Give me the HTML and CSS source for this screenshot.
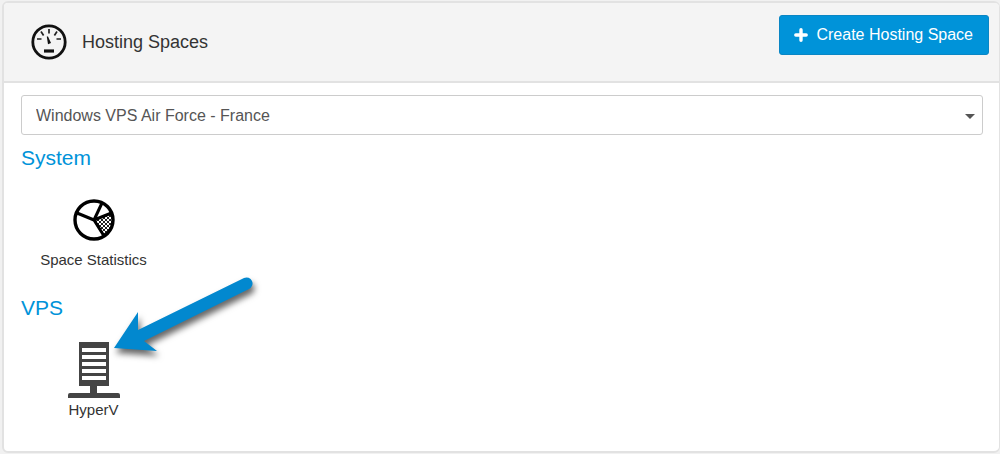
FILE: index.html
```html
<!DOCTYPE html>
<html lang="en">
<head>
    <meta charset="UTF-8">
    <title>Hosting Spaces</title>
    <link rel="stylesheet" href="styles.css">
</head>
<body>
    <main class="panel">
        <header class="panel-header">
            <svg class="gauge" viewBox="0 0 36 36" aria-hidden="true">
                <circle cx="18" cy="18" r="16.2" fill="none" stroke="#111" stroke-width="2.8"/>
                <path d="M18 5v4.500M10 7.500l2.600 4M26 7.500l-2.600 4M6 15h4.500M25.500 15h4.500" stroke="#222" stroke-width="1.700"/>
                <path d="M15.800 12.500l1.200 0 3 6.500-3 1.300z" fill="#111"/>
                <path d="M13 27h10" stroke="#111" stroke-width="3.200"/>
            </svg>
            <h1>Hosting Spaces</h1>
            <button type="button" class="create">
                <svg viewBox="0 0 14 14" aria-hidden="true"><path d="M7 1.800v10.400M1.800 7h10.400" stroke="#fff" stroke-width="3.400" stroke-linecap="round"/></svg>
                Create Hosting Space
            </button>
        </header>

        <div class="panel-body">
            <div class="select-wrap">
                <select class="space-select" aria-label="Hosting space">
                    <option>Windows VPS Air Force - France</option>
                </select>
            </div>

            <section>
                <h2>System</h2>
                <a href="#" class="tile">
                    <span class="tile-icon">
                        <svg class="pie" viewBox="0 0 42 42" aria-hidden="true">
                            <defs>
                                <pattern id="dots" width="4" height="4" patternUnits="userSpaceOnUse">
                                    <path d="M0 0h2v2H0zM2 2h2v2H2z" fill="#222"/>
                                </pattern>
                            </defs>
                            <path d="M21 21l17.500-7A19 19 0 0 1 31 37z" fill="url(#dots)"/>
                            <circle cx="21" cy="21" r="19" fill="none" stroke="#000" stroke-width="3.400"/>
                            <path d="M21 21L4 14M21 21l8-17M21 21l17.500-7M21 21l10 16" stroke="#000" stroke-width="3"/>
                        </svg>
                    </span>
                    Space Statistics
                </a>
            </section>

            <section>
                <h2>VPS</h2>
                <a href="#" class="tile">
                    <span class="tile-icon">
                        <svg class="server" viewBox="0 0 52 56" aria-hidden="true">
                            <path d="M11 0h30v44H29v7h21q2 0 2 2v3H0v-3q0-2 2-2h20v-7H11z" fill="#444"/>
                            <path d="M14 8h24M14 15h24M14 22h24M14 29h24M14 36h24" stroke="#fff" stroke-width="4"/>
                        </svg>
                    </span>
                    HyperV
                    <svg class="arrow" viewBox="0 0 160 90" aria-hidden="true">
                        <path d="M4 73L28 37V55L134 3A6 6 0 0 1 139 14L34 66L47 76Z" fill="#0288cf"/>
                    </svg>
                </a>
            </section>
        </div>
    </main>
</body>
</html>
```
FILE: styles.css
```css
* {
    box-sizing: border-box;
}
body {
    margin: 0;
    padding: 1px 0 1px 2px;
    background: #f1f1f1;
    color: #333;
    font-family: "Liberation Sans", Arial, sans-serif;
}
.panel {
    background: #fff;
    border: 2px solid #e2e2e2;
    border-right-width: 1px;
    border-radius: 6px;
}
.panel-header {
    display: flex;
    align-items: center;
    height: 80px;
    padding: 0 10px 0 27px;
    background: #f4f4f4;
    border-bottom: 2px solid #e2e2e2;
    border-radius: 4px 4px 0 0;
}
.gauge {
    width: 36px;
    height: 36px;
}
h1 {
    margin: 0 auto 0 15px;
    font-size: 18px;
    font-weight: normal;
    line-height: 24px;
}
.create {
    display: flex;
    align-items: center;
    align-self: flex-start;
    gap: 8px;
    height: 40px;
    margin-top: 12px;
    padding: 0 15px 0 14px;
    border: 1px solid #0a86c4;
    border-radius: 3px;
    background: #0093d9;
    color: #fff;
    font-family: inherit;
    font-size: 16px;
    cursor: pointer;
}
.create svg {
    width: 14px;
    height: 14px;
}
.panel-body {
    padding: 12px 16px 5px 17px;
}
.select-wrap {
    position: relative;
    margin-bottom: 11px;
}
.select-wrap::after {
    content: "";
    position: absolute;
    top: 19px;
    right: 8px;
    border: 5px solid transparent;
    border-top-color: #555;
    border-bottom: 0;
    pointer-events: none;
}
.space-select {
    display: block;
    width: 100%;
    height: 40px;
    padding: 0 30px 0 14px;
    border: 1px solid #ccc;
    border-radius: 3px;
    background: #fff;
    color: #555;
    font-family: inherit;
    font-size: 16px;
    appearance: none;
}
section {
    padding-bottom: 26px;
}
h2 {
    margin: 0 0 20px;
    color: #0093d9;
    font-size: 21px;
    font-weight: normal;
    line-height: 24px;
}
.tile {
    position: relative;
    display: block;
    width: 145px;
    color: #333;
    font-size: 15px;
    line-height: 20px;
    text-align: center;
    text-decoration: none;
}
.tile-icon {
    display: flex;
    align-items: center;
    justify-content: center;
    height: 60px;
}
.pie {
    width: 42px;
    height: 42px;
}
.server {
    width: 52px;
    height: 56px;
}
/* pointer to the HyperV tile */
.arrow {
    position: absolute;
    top: -65px;
    left: 89px;
    width: 160px;
    height: 90px;
    filter: drop-shadow(2px 5px 3px rgba(0, 0, 0, 0.6));
    pointer-events: none;
}
```
